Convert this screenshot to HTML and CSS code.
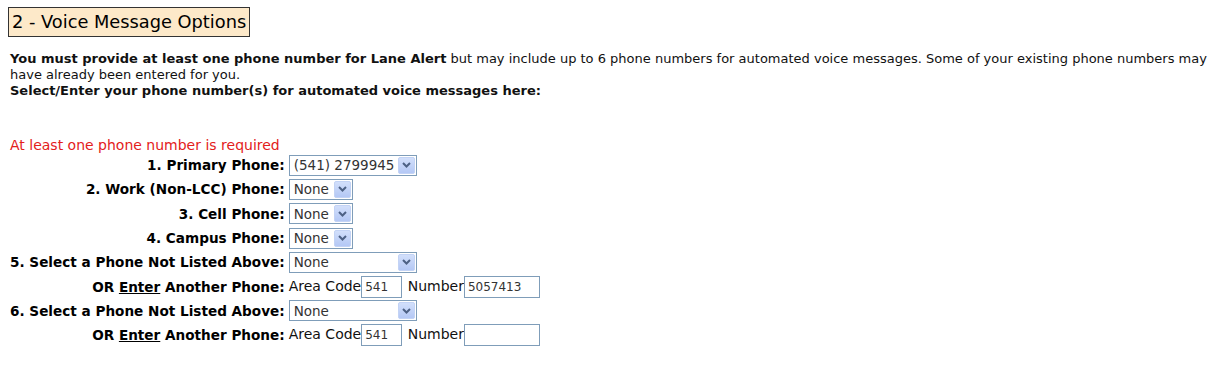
FILE: index.html
```html
<!DOCTYPE html>
<html>
<head>
    <title>Voice Message Options</title>
    <link rel="stylesheet" href="styles.css">
</head>
<body>
    <div class="section">
        <h2 class="section-title">2 - Voice Message Options</h2>

        <p class="intro">
            <strong>You must provide at least one phone number for Lane Alert</strong> but may include up to 6 phone numbers for automated voice messages. Some of your existing phone numbers may have already been entered for you.<br>
            <strong>Select/Enter your phone number(s) for automated voice messages here:</strong>
        </p>

        <div class="error">At least one phone number is required</div>

        <table class="phone-table">
            <tr>
                <th>1. Primary Phone:</th>
                <td>
                    <span class="combo combo-wide">
                        <select><option>(541) 2799945</option><option>None</option></select>
                        <span class="arrow"><svg width="9" height="6" viewBox="0 0 9 6"><path d="M1 1l3.5 3.5L8 1" fill="none" stroke="#4d6185" stroke-width="2"/></svg></span>
                    </span>
                </td>
            </tr>
            <tr>
                <th>2. Work (Non-LCC) Phone:</th>
                <td>
                    <span class="combo combo-small">
                        <select><option>None</option></select>
                        <span class="arrow"><svg width="9" height="6" viewBox="0 0 9 6"><path d="M1 1l3.5 3.5L8 1" fill="none" stroke="#4d6185" stroke-width="2"/></svg></span>
                    </span>
                </td>
            </tr>
            <tr>
                <th>3. Cell Phone:</th>
                <td>
                    <span class="combo combo-small">
                        <select><option>None</option></select>
                        <span class="arrow"><svg width="9" height="6" viewBox="0 0 9 6"><path d="M1 1l3.5 3.5L8 1" fill="none" stroke="#4d6185" stroke-width="2"/></svg></span>
                    </span>
                </td>
            </tr>
            <tr>
                <th>4. Campus Phone:</th>
                <td>
                    <span class="combo combo-small">
                        <select><option>None</option></select>
                        <span class="arrow"><svg width="9" height="6" viewBox="0 0 9 6"><path d="M1 1l3.5 3.5L8 1" fill="none" stroke="#4d6185" stroke-width="2"/></svg></span>
                    </span>
                </td>
            </tr>
            <tr>
                <th>5. Select a Phone Not Listed Above:</th>
                <td>
                    <span class="combo combo-wide">
                        <select><option>None</option></select>
                        <span class="arrow"><svg width="9" height="6" viewBox="0 0 9 6"><path d="M1 1l3.5 3.5L8 1" fill="none" stroke="#4d6185" stroke-width="2"/></svg></span>
                    </span>
                </td>
            </tr>
            <tr>
                <th>OR <u>Enter</u> Another Phone:</th>
                <td class="manual">
                    Area Code<input type="text" class="area" value="541">
                    Number<input type="text" class="number" value="5057413">
                </td>
            </tr>
            <tr>
                <th>6. Select a Phone Not Listed Above:</th>
                <td>
                    <span class="combo combo-wide">
                        <select><option>None</option></select>
                        <span class="arrow"><svg width="9" height="6" viewBox="0 0 9 6"><path d="M1 1l3.5 3.5L8 1" fill="none" stroke="#4d6185" stroke-width="2"/></svg></span>
                    </span>
                </td>
            </tr>
            <tr>
                <th>OR <u>Enter</u> Another Phone:</th>
                <td class="manual">
                    Area Code<input type="text" class="area" value="541">
                    Number<input type="text" class="number" value="">
                </td>
            </tr>
        </table>
    </div>
</body>
</html>
```

FILE: styles.css
```css
* { box-sizing: border-box; }
body { margin: 0; padding: 7px 8px; font-family: 'DejaVu Sans', Verdana, sans-serif; font-size: 13px; color: #111; background: white; }
.section-title { display: inline-block; margin: 0; padding: 0 3px; font-size: 17.8px; font-weight: normal; line-height: 28px; background: #fde9c9; border: 1px solid #333; color: #000; }
.intro { margin: 14px 0 0 2px; line-height: 16px; }
.intro strong { color: #111; }
.error { margin: 38px 0 0 2px; font-size: 14px; color: #e3201b; line-height: 16px; }
.phone-table { border-collapse: collapse; margin: 0 0 0 2px; }
.phone-table th { text-align: right; white-space: nowrap; padding: 2px 4px 2px 0; font-size: 13.6px; font-weight: bold; height: 24.3px; color: #000; }
.phone-table td { padding: 0; white-space: nowrap; }
.combo { position: relative; display: inline-block; vertical-align: middle; height: 21px; }
.combo select { appearance: none; -webkit-appearance: none; width: 100%; height: 21px; margin: 0; padding: 0 0 0 4px; border: 1px solid #7f9db9; border-radius: 0; background: white; font-family: inherit; font-size: 13.5px; color: #333; }
.combo-wide { width: 128px; }
.combo-small { width: 64px; }
.arrow { position: absolute; top: 2px; right: 2px; width: 17px; height: 17px; border: 1px solid #c3d3f5; border-radius: 2px; background: linear-gradient(#d2dffb, #b4c8f5); display: flex; align-items: center; justify-content: center; pointer-events: none; }
.manual { font-size: 14px; }
.manual input { height: 22px; margin: 0 1px 0 0; padding: 0 3px; border: 1px solid #7f9db9; font-family: inherit; font-size: 12px; color: #333; vertical-align: middle; }
.area { width: 41px; }
.number { width: 76px; }
```
